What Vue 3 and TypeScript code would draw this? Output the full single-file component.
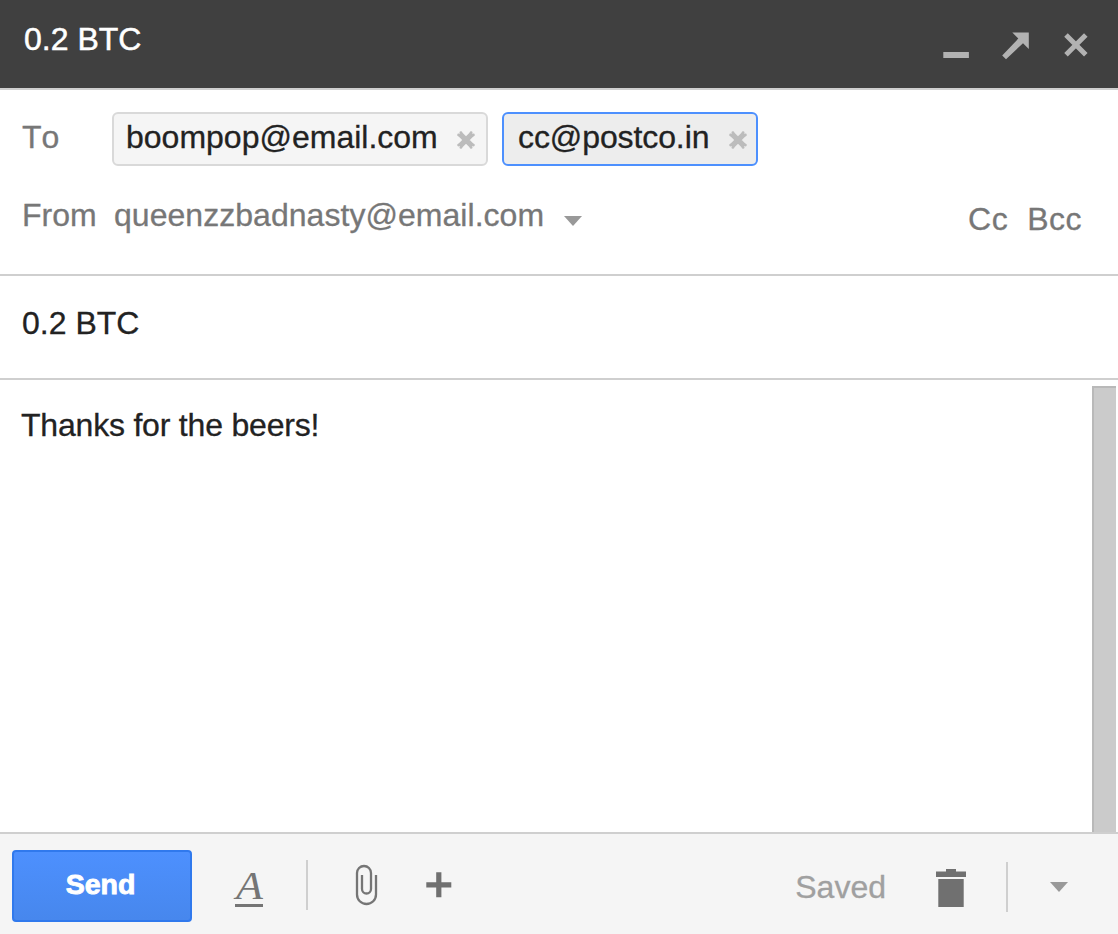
<script setup lang="ts">
import { ref } from 'vue'

interface Recipient {
  address: string
  selected: boolean
}

const subject = ref('0.2 BTC')
const sender = ref('queenzzbadnasty@email.com')
const message = ref('Thanks for the beers!')
const recipients = ref<Recipient[]>([
  { address: 'boompop@email.com', selected: false },
  { address: 'cc@postco.in', selected: true },
])

function removeRecipient(index: number): void {
  recipients.value.splice(index, 1)
}
</script>

<template>
  <div class="compose">
    <header class="titlebar">
      <span class="title">{{ subject }}</span>
      <svg class="window-controls" width="148" height="34" viewBox="0 0 148 34">
        <rect x="3.3" y="24" width="25.6" height="6" fill="#b2b2b2" />
        <path d="M72.3 4.4H88.8V21L83 15.2L66 31.2L62.2 27.4L78.3 10.6Z" fill="#b2b2b2" />
        <path d="M126 6.9L145.8 26.7M145.8 6.9L126 26.7" stroke="#b2b2b2" stroke-width="5" />
      </svg>
    </header>

    <section class="addresses">
      <div class="row to-row">
        <span class="label">To</span>
        <div
          v-for="(person, index) in recipients"
          :key="person.address"
          class="chip"
          :class="{ selected: person.selected }"
        >
          <span class="address">{{ person.address }}</span>
          <svg class="remove" width="20" height="20" viewBox="0 0 20 20" @click="removeRecipient(index)">
            <path d="M3.8 3.8L16.2 16.2M16.2 3.8L3.8 16.2" stroke="#bcbcbc" stroke-width="5.4" />
            <path
              d="M4.9 2.6V2.7M2.6 4.9H2.7M15.1 2.6V2.7M17.4 4.9H17.3M17.4 15.1H17.3M15.1 17.4V17.3M4.9 17.4V17.3M2.6 15.1H2.7"
              stroke="#bcbcbc"
              stroke-width="2.8"
              stroke-linecap="round"
            />
          </svg>
        </div>
      </div>
      <div class="row from-row">
        <span class="label">From</span>
        <span class="sender">{{ sender }}</span>
        <svg class="caret" width="18" height="10" viewBox="0 0 18 10"><path d="M0 0H18L9 10Z" fill="#999" /></svg>
        <span class="copies"><span>Cc</span><span>Bcc</span></span>
      </div>
    </section>

    <section class="subject">{{ subject }}</section>

    <main class="message">
      <div class="text">{{ message }}</div>
      <div class="scrollbar"></div>
    </main>

    <footer class="toolbar">
      <button class="send" type="button">Send</button>
      <span class="format"><span class="letter">A</span></span>
      <span class="divider"></span>
      <svg class="clip" width="24" height="44" viewBox="0 0 24 44">
        <path
          d="M22 12V31.5A9.5 9.5 0 0 1 3 31.5V10A7 7 0 0 1 17 10V26A4.5 4.5 0 0 1 8 26V12"
          fill="none"
          stroke="#757575"
          stroke-width="2.3"
        />
      </svg>
      <svg class="plus" width="26" height="26" viewBox="0 0 26 26">
        <path d="M12.8 0.3V25.3M0.3 12.8H25.3" stroke="#707070" stroke-width="5.2" />
      </svg>
      <span class="saved">Saved</span>
      <svg class="trash" width="30" height="38" viewBox="0 0 30 38">
        <path d="M10 0H20V2.6H30V8H0V2.6H10ZM2.3 10H27.7V38H2.3Z" fill="#707070" />
      </svg>
      <span class="divider end"></span>
      <svg class="more" width="18" height="10" viewBox="0 0 18 10"><path d="M0 0H18L9 10Z" fill="#999" /></svg>
    </footer>
  </div>
</template>

<style>
body {
  margin: 0;
  overflow: hidden;
}
</style>

<style scoped>
.compose {
  display: flex;
  flex-direction: column;
  box-sizing: border-box;
  width: 1118px;
  height: 934px;
  background: #fff;
  color: #222;
  font: 32px/36px "Liberation Sans", Arial, sans-serif;
  white-space: nowrap;
  -webkit-text-stroke: 0.3px currentColor;
}
.compose * {
  box-sizing: border-box;
}
svg {
  display: block;
  flex: none;
}
.titlebar {
  display: flex;
  align-items: flex-start;
  justify-content: space-between;
  height: 90px;
  padding: 21px 30px 0 24px;
  background: #404040;
  border-bottom: 2px solid #cfcfcf;
  color: #fff;
}
.title {
  -webkit-text-stroke: 0.5px #fff;
}
.window-controls {
  margin-top: 7px;
}
.addresses {
  height: 186px;
  padding-top: 22px;
  border-bottom: 2px solid #cfcfcf;
}
.row {
  display: flex;
  align-items: flex-start;
  padding-left: 22px;
  color: #777;
}
.to-row {
  height: 76px;
}
.to-row .label {
  width: 90px;
  padding-top: 7px;
  font-kerning: none;
}
.chip {
  display: flex;
  align-items: flex-start;
  justify-content: space-between;
  width: 376px;
  height: 54px;
  margin-right: 14px;
  padding: 5px 10px 0 12px;
  border: 2px solid #d9d9d9;
  border-radius: 6px;
  background: #f5f5f5;
  color: #222;
}
.chip.selected {
  width: 256px;
  padding: 5px 8px 0 14px;
  border-color: #4d90fe;
  background: #ededed;
}
.selected .address {
  letter-spacing: -0.1px;
}
.remove {
  margin-top: 11px;
}
.from-row {
  padding-top: 9px;
}
.from-row .label {
  width: 92px;
}
.sender {
  width: 450px;
  letter-spacing: 0.04px;
}
.caret {
  margin-top: 19px;
}
.copies {
  display: flex;
  gap: 19px;
  margin: 4px 36px 0 auto;
  letter-spacing: 0.5px;
}
.subject {
  height: 104px;
  padding: 29px 0 0 22px;
  border-bottom: 2px solid #cfcfcf;
}
.message {
  display: flex;
  justify-content: space-between;
  height: 452px;
  padding: 6px 2px 0 21px;
}
.text {
  padding-top: 21px;
  letter-spacing: -0.2px;
}
.scrollbar {
  width: 24px;
  background: #cbcbcb;
  border: solid #b9b9b9;
  border-width: 2px 0 0 2px;
}
.toolbar {
  display: flex;
  align-items: flex-start;
  height: 102px;
  padding: 16px 50px 0 12px;
  background: #f5f5f5;
  border-top: 2px solid #cfcfcf;
}
.send {
  width: 180px;
  height: 72px;
  padding: 0 3px 3px 0;
  border: 2px solid #3079ed;
  border-radius: 4px;
  background: linear-gradient(#4d90fe, #4787ed);
  color: #fff;
  font: bold 28.5px/33px "Liberation Sans", Arial, sans-serif;
  -webkit-text-stroke: 0.9px #fff;
}
.format {
  width: 28px;
  height: 41px;
  margin: 16px 0 0 43px;
  border-bottom: 3px solid #757575;
  color: #757575;
  font: italic 39px/44px "Liberation Serif", "Times New Roman", serif;
  -webkit-text-stroke: 0;
}
.letter {
  display: block;
  transform: translate(2px, 1px) scaleX(1.13);
  transform-origin: left;
  margin-top: -3px;
  margin-left: -1px;
}
.divider {
  width: 2px;
  height: 50px;
  margin: 10px 0 0 43px;
  background: #cfcfcf;
}
.clip {
  margin: 13px 0 0 46px;
}
.plus {
  margin: 22px 0 0 48px;
}
.saved {
  margin: 19px 50px 0 auto;
  color: #a0a0a0;
}
.trash {
  margin-top: 19px;
}
.divider.end {
  margin: 12px 42px 0 40px;
}
.more {
  margin-top: 32px;
}
</style>
